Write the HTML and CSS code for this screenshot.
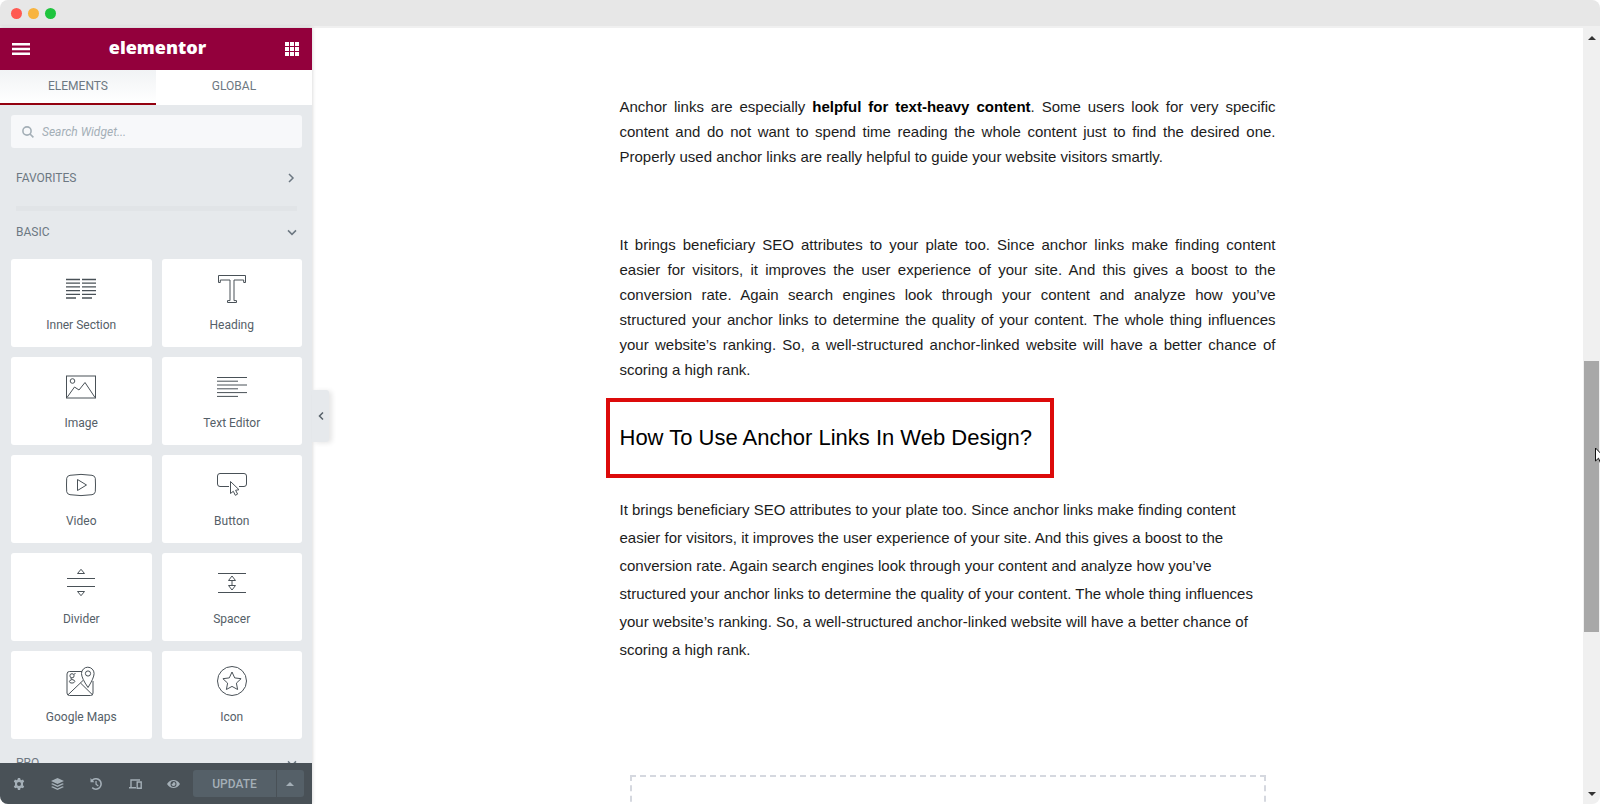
FILE: index.html
```html
<!DOCTYPE html>
<html lang="en">
<head>
    <meta charset="UTF-8">
    <meta name="viewport" content="width=device-width, initial-scale=1.0">
    <title>Elementor</title>
    <link rel="stylesheet" href="styles.css">
</head>
<body>
    <div class="window">
        <div class="titlebar">
            <span class="dot red"></span>
            <span class="dot yellow"></span>
            <span class="dot green"></span>
        </div>

        <div class="editor">
            <!-- Widget panel -->
            <aside class="panel">
                <header class="panel-header">
                    <button type="button" class="icon-btn" aria-label="Menu">
                        <svg width="18" height="12" viewBox="0 0 18 12" fill="#fff"><path d="M0 0h18v2.6H0zM0 4.7h18v2.6H0zM0 9.4h18V12H0z"/></svg>
                    </button>
                    <span class="logo">elementor</span>
                    <button type="button" class="icon-btn" aria-label="Widgets">
                        <svg width="14" height="14" viewBox="0 0 14 14" fill="#fff"><path d="M0 0h4v4H0zM5 0h4v4H5zM10 0h4v4h-4zM0 5h4v4H0zM5 5h4v4H5zM10 5h4v4h-4zM0 10h4v4H0zM5 10h4v4H5zM10 10h4v4h-4z"/></svg>
                    </button>
                </header>

                <nav class="tabs">
                    <button type="button" class="tab active">ELEMENTS</button>
                    <button type="button" class="tab">GLOBAL</button>
                </nav>

                <div class="panel-body">
                    <div class="search">
                        <svg width="12" height="12" viewBox="0 0 12 12" fill="none" stroke="#a4afb7" stroke-width="1.6"><circle cx="5" cy="5" r="4.1"/><path d="M8 8l3.4 3.4"/></svg>
                        <input type="text" placeholder="Search Widget..." aria-label="Search Widget">
                    </div>

                    <button type="button" class="category favorites">FAVORITES
                        <svg width="10" height="10" viewBox="0 0 10 10" fill="none" stroke="#6d7882" stroke-width="1.5"><path d="M2 1l4 4-4 4"/></svg>
                    </button>
                    <button type="button" class="category">BASIC
                        <svg width="10" height="10" viewBox="0 0 10 10" fill="none" stroke="#6d7882" stroke-width="1.5"><path d="M1 3.4l4 4 4-4"/></svg>
                    </button>

                    <div class="widgets">
                        <button type="button" class="widget">
                            <svg viewBox="0 0 30 30" stroke-width="1.3"><path d="M0 5.5h14M0 9.2h14M0 12.9h14M0 16.6h14M0 20.3h14M0 24h10M16 5.5h14M16 9.2h14M16 12.9h14M16 16.6h14M16 20.3h14M16 24h10"/></svg>
                            <span>Inner Section</span>
                        </button>
                        <button type="button" class="widget">
                            <svg viewBox="0 0 30 30"><path d="M1.5 1.5h27v7h-1.800V6H17v20.600h2.500v1.900h-9v-1.900H13V6H3.300v2.500H1.500z"/></svg>
                            <span>Heading</span>
                        </button>
                        <button type="button" class="widget">
                            <svg viewBox="0 0 30 30"><rect x=".5" y="4" width="29" height="22"/><circle cx="6.500" cy="9" r="2.300"/><path d="M1 25.500L8.500 15l4.500 3 6-7.500L29 25.500"/></svg>
                            <span>Image</span>
                        </button>
                        <button type="button" class="widget">
                            <svg viewBox="0 0 30 30"><path d="M0 5.500h30M0 9.200h21M0 13h30M0 16.800h21M0 20.600h30M0 24.400h21"/></svg>
                            <span>Text Editor</span>
                        </button>
                        <button type="button" class="widget">
                            <svg viewBox="0 0 30 30"><path d="M4 5.300Q15 3.500 26 5.300q3 .5 3.300 3 .4 6.700 0 13.400-.3 2.500-3.300 3-11 1.800-22 0-3-.5-3.300-3-.4-6.700 0-13.400Q1 5.800 4 5.300z"/><path d="M11.500 9.500v11l9-5.500z"/></svg>
                            <span>Video</span>
                        </button>
                        <button type="button" class="widget">
                            <svg viewBox="0 0 30 30"><path d="M12 16.500H3q-2.500 0-2.500-2.500V6Q.5 3.500 3 3.500h24q2.500 0 2.500 2.500v8q0 2.500-2.500 2.500h-5"/><path d="M13.500 11.500v12l2.800-2.200 2 4 2.300-1.200-2-3.800 3.400-.6z"/></svg>
                            <span>Button</span>
                        </button>
                        <button type="button" class="widget">
                            <svg viewBox="0 0 30 30"><path d="M1 10.500h28M1 18.500h28M11.500 5.500h7L15 1.300zM11.500 23.500h7L15 27.700z"/></svg>
                            <span>Divider</span>
                        </button>
                        <button type="button" class="widget">
                            <svg viewBox="0 0 30 30"><path d="M1 5.500h28M1 24.500h28M11.500 12.500h7L15 8zM11.500 17.500h7L15 22zM15 12.500v5"/></svg>
                            <span>Spacer</span>
                        </button>
                        <button type="button" class="widget">
                            <svg viewBox="0 0 30 30"><path d="M16 5.500H3.500q-2.500 0-2.500 2.500v19q0 2.500 2.500 2.500h21q2.500 0 2.500-2.500V15M2 28.800L17 14.500M14.500 17L26.500 28.800"/><path d="M22 21.500Q15.500 12 15.500 7.500a6.300 6.300 0 0 1 12.600 0Q28 12 22 21.500z"/><circle cx="22" cy="7.500" r="2.600"/><circle cx="6" cy="9.800" r="2.100"/><path d="M8 8.200L9.500 7.500M5.500 12q-1.500 1 .5 1.500 3 .5 2.800 2-.5 1.600-2.800 1.600-2.600 0-2.600-1.600 0-1.300 2.200-1.700"/></svg>
                            <span>Google Maps</span>
                        </button>
                        <button type="button" class="widget">
                            <svg viewBox="0 0 30 30"><circle cx="15" cy="15" r="14.500"/><path d="M15 6l2.700 5.900 6.400.8-4.700 4.400 1.200 6.400-5.600-3.100-5.600 3.100 1.200-6.400-4.700-4.400 6.400-.8z"/></svg>
                            <span>Icon</span>
                        </button>
                    </div>

                    <button type="button" class="category">PRO
                        <svg width="10" height="10" viewBox="0 0 10 10" fill="none" stroke="#6d7882" stroke-width="1.5"><path d="M1 3.400l4 4 4-4"/></svg>
                    </button>
                </div>

                <footer class="panel-footer">
                    <button type="button" class="tool" aria-label="Settings">
                        <svg width="12" height="12" viewBox="0 0 12 12"><path fill-rule="evenodd" d="M4.900 0h2.200l.3 1.600 1.100.6 1.500-.6 1.200 1.900-1.200 1.200v2.500l1.200 1.200-1.200 1.900-1.500-.6-1.100.6L7.100 12H4.900l-.3-1.700-1.100-.6-1.500.6L.8 8.400 2 7.200V4.700L.8 3.500 2 1.600l1.500.6 1.100-.6zM6 4a2 2 0 1 0 0 4 2 2 0 0 0 0-4z"/></svg>
                    </button>
                    <button type="button" class="tool" aria-label="Navigator">
                        <svg width="13" height="12" viewBox="0 0 13 12"><path d="M6.500 0L13 3 6.500 6 0 3zM1.600 5.200l4.900 2.200 4.900-2.200L13 6 6.500 9 0 6zM1.600 8.200l4.900 2.200 4.900-2.200L13 9l-6.500 3L0 9z"/></svg>
                    </button>
                    <button type="button" class="tool" aria-label="History">
                        <svg width="12" height="12" viewBox="0 0 12 12"><path d="M.5 0l1.400 1.500A6 6 0 1 1 1.700 10.200l1-1.200A4.400 4.400 0 1 0 3 2.700L4.500 4.300H.5zM5.400 3h1.300v3l2 1.500-.8 1-2.500-1.900z"/></svg>
                    </button>
                    <button type="button" class="tool" aria-label="Responsive Mode">
                        <svg width="13" height="12" viewBox="0 0 13 12" fill="none" stroke="#a4afb7" stroke-width="1.400"><path d="M11 2H2v7M0 9.800h7M8.200 4h4v6.300h-4z"/></svg>
                    </button>
                    <button type="button" class="tool" aria-label="Preview Changes">
                        <svg width="13" height="10" viewBox="0 0 13 10"><path fill-rule="evenodd" d="M0 5Q2.500 1 6.500 1T13 5Q10.500 9 6.500 9T0 5zM6.500 2a3 3 0 1 0 0 6 3 3 0 0 0 0-6zM6.500 3a2 2 0 1 1-2 2q1.400.2 2-2z"/></svg>
                    </button>
                    <div class="publish">
                        <button type="button" class="update">UPDATE</button>
                        <button type="button" class="options" aria-label="Save Options">
                            <svg width="8" height="4" viewBox="0 0 8 4"><path d="M0 4l4-4 4 4z"/></svg>
                        </button>
                    </div>
                </footer>

                <button type="button" class="collapse" aria-label="Hide Panel">
                    <svg width="6" height="8" viewBox="0 0 6 8" fill="none" stroke="#556068" stroke-width="1.500"><path d="M5 .5L1.500 4 5 7.500"/></svg>
                </button>
            </aside>

            <!-- Page preview -->
            <main class="preview">
                <article class="content">
                    <p class="justified">Anchor links are especially <strong>helpful for text-heavy content</strong>. Some users look for very specific content and do not want to spend time reading the whole content just to find the desired one. Properly used anchor links are really helpful to guide your website visitors smartly.</p>
                    <p class="justified second">It brings beneficiary SEO attributes to your plate too. Since anchor links make finding content easier for visitors, it improves the user experience of your site. And this gives a boost to the conversion rate. Again search engines look through your content and analyze how you’ve structured your anchor links to determine the quality of your content. The whole thing influences your website’s ranking. So, a well-structured anchor-linked website will have a better chance of scoring a high rank.</p>
                    <h2>How To Use Anchor Links In Web Design?</h2>
                    <p class="loose">It brings beneficiary SEO attributes to your plate too. Since anchor links make finding content easier for visitors, it improves the user experience of your site. And this gives a boost to the conversion rate. Again search engines look through your content and analyze how you’ve structured your anchor links to determine the quality of your content. The whole thing influences your website’s ranking. So, a well-structured anchor-linked website will have a better chance of scoring a high rank.</p>
                    <div class="drop-area"></div>
                </article>
            </main>

            <div class="scrollbar">
                <svg width="8" height="4" viewBox="0 0 8 4" fill="#333"><path d="M0 4l4-4 4 4z"/></svg>
                <div class="track">
                    <div class="thumb"></div>
                </div>
                <svg width="8" height="4" viewBox="0 0 8 4" fill="#333"><path d="M0 0l4 4 4-4z"/></svg>
                <svg class="cursor" width="12" height="18" viewBox="0 0 12 18" fill="#fff" stroke="#111"><path d="M.5 1v13l3-2.800 2 4.800 2.200-1-2-4.500h4z"/></svg>
            </div>
        </div>
    </div>
</body>
</html>
```

FILE: styles.css
```css
* {
    box-sizing: border-box;
}
body {
    margin: 0;
    background-color: #fff;
    font-family: Roboto, sans-serif;
}
button {
    padding: 0;
    border: 0;
    background: none;
    font-family: inherit;
    font-size: 12px;
    cursor: pointer;
}
.window {
    display: flex;
    flex-direction: column;
    height: 100vh;
    border-radius: 8px;
    overflow: hidden;
}

/* Title bar */
.titlebar {
    display: flex;
    flex: none;
    align-items: center;
    gap: 6px;
    height: 28px;
    padding-left: 11px;
    background-color: #e7e7e7;
    border-bottom: 2px solid #f0f0f0;
}
.dot {
    width: 11px;
    height: 11px;
    border-radius: 50%;
}
.red {
    background-color: #ff5a52;
}
.yellow {
    background-color: #f8b43f;
}
.green {
    background-color: #1fc43e;
}
.editor {
    display: flex;
    flex: 1;
    min-height: 0;
}

/* Panel */
.panel {
    position: relative;
    z-index: 1;
    display: flex;
    flex: none;
    flex-direction: column;
    width: 312px;
    background-color: #e6e9ec;
    box-shadow: 0 0 4px rgba(0, 0, 0, 0.2);
}
.panel-header {
    display: flex;
    flex: none;
    align-items: center;
    justify-content: space-between;
    height: 42px;
    padding: 0 13px 0 12px;
    background-color: #93003c;
}
.icon-btn {
    display: flex;
}
.logo {
    height: 42px;
    color: #fff;
    font-family: "Open Sans", sans-serif;
    font-size: 18px;
    font-weight: 800;
    line-height: 38px;
}
.tabs {
    display: flex;
    flex: none;
    height: 35px;
    background-color: #fff;
}
.tab {
    flex: 1;
    padding-bottom: 1px;
    border-bottom: 2px solid transparent;
    color: #6d7882;
}
.tab.active {
    background-image: linear-gradient(#f1f3f5, #fff);
    border-bottom-color: #93000f;
}
.panel-body {
    flex: 1;
    min-height: 0;
    padding: 10px 10px 0 11px;
    overflow: hidden;
}
.search {
    display: flex;
    align-items: center;
    gap: 8px;
    height: 33px;
    padding: 0 11px;
    background-color: #f7f8fa;
    border-radius: 3px;
}
.search input {
    flex: 1;
    padding: 0;
    border: 0;
    outline: 0;
    background: none;
    font-family: inherit;
    font-size: 12px;
    font-style: italic;
}
.search input::placeholder {
    color: #a4afb7;
}
.category {
    display: flex;
    align-items: center;
    justify-content: space-between;
    width: 100%;
    height: 42px;
    padding: 0 5px;
    color: #6d7882;
}
.favorites {
    position: relative;
    height: 63px;
    padding-bottom: 3px;
}
.favorites::after {
    content: "";
    position: absolute;
    right: 5px;
    bottom: 0;
    left: 5px;
    height: 5px;
    background-color: #e1e4e7;
}
.widgets {
    display: grid;
    grid-template-columns: 1fr 1fr;
    gap: 10px;
    padding: 6px 0 3px;
}
.widget {
    display: flex;
    flex-direction: column;
    align-items: center;
    gap: 14px;
    height: 88px;
    padding-top: 15px;
    background-color: #fff;
    border-radius: 3px;
    color: #556068;
}
.widget svg {
    width: 30px;
    height: 30px;
    fill: none;
    stroke: #495157;
}

/* Panel footer */
.panel-footer {
    display: flex;
    flex: none;
    align-items: center;
    height: 41px;
    padding-right: 8px;
    background-color: #495157;
    fill: #a4afb7;
}
.tool {
    display: flex;
    flex: 1;
    justify-content: center;
}
.publish {
    display: flex;
    gap: 1px;
    height: 27px;
}
.update,
.options {
    background-color: #556068;
    color: #a4afb7;
    font-weight: 500;
}
.update {
    width: 83px;
    border-radius: 3px 0 0 3px;
}
.options {
    display: flex;
    align-items: center;
    justify-content: center;
    width: 27px;
    border-radius: 0 3px 3px 0;
    fill: #a4afb7;
}
.collapse {
    position: absolute;
    top: calc(50% - 26px);
    left: 100%;
    display: flex;
    align-items: center;
    justify-content: center;
    width: 17px;
    height: 52px;
    background-color: #e6e9ec;
    border-radius: 0 3px 3px 0;
    box-shadow: 3px 1px 5px rgba(0, 0, 0, 0.1);
}

/* Preview */
.preview {
    flex: 1;
    min-width: 0;
    padding: 66px 20px 0;
    overflow: hidden;
    background-color: #fff;
}
.content {
    max-width: 656px;
    margin: 0 auto;
    color: #1c1c1c;
    font-family: "Liberation Sans", Arial, sans-serif;
    font-size: 15px;
}
.content p {
    margin: 0;
}
.content strong {
    color: #000;
}
.justified {
    line-height: 25px;
    text-align: justify;
}
.content .second {
    margin-top: 63px;
}
.content h2 {
    width: fit-content;
    margin: 16px 0 18px -14px;
    padding: 22px 18px 22px 10px;
    border: 4px solid #dc0a0a;
    color: #000;
    font-size: 22px;
    font-weight: normal;
    line-height: 28px;
}
.loose {
    line-height: 28px;
}
.drop-area {
    height: 120px;
    margin: 111px 10px 0;
    border: 2px dashed #d5d8df;
}

/* Scrollbar */
.scrollbar {
    position: relative;
    display: flex;
    flex: none;
    flex-direction: column;
    align-items: center;
    width: 17px;
    padding: 8px 0;
    background-color: #f0f0f0;
}
.track {
    display: grid;
    flex: 1;
    grid-template-rows: 321fr 271fr 160fr;
    width: 15px;
}
.thumb {
    grid-row: 2;
    background-color: #a8a8a8;
}
.cursor {
    position: absolute;
    top: 54%;
    left: 12px;
}
```
